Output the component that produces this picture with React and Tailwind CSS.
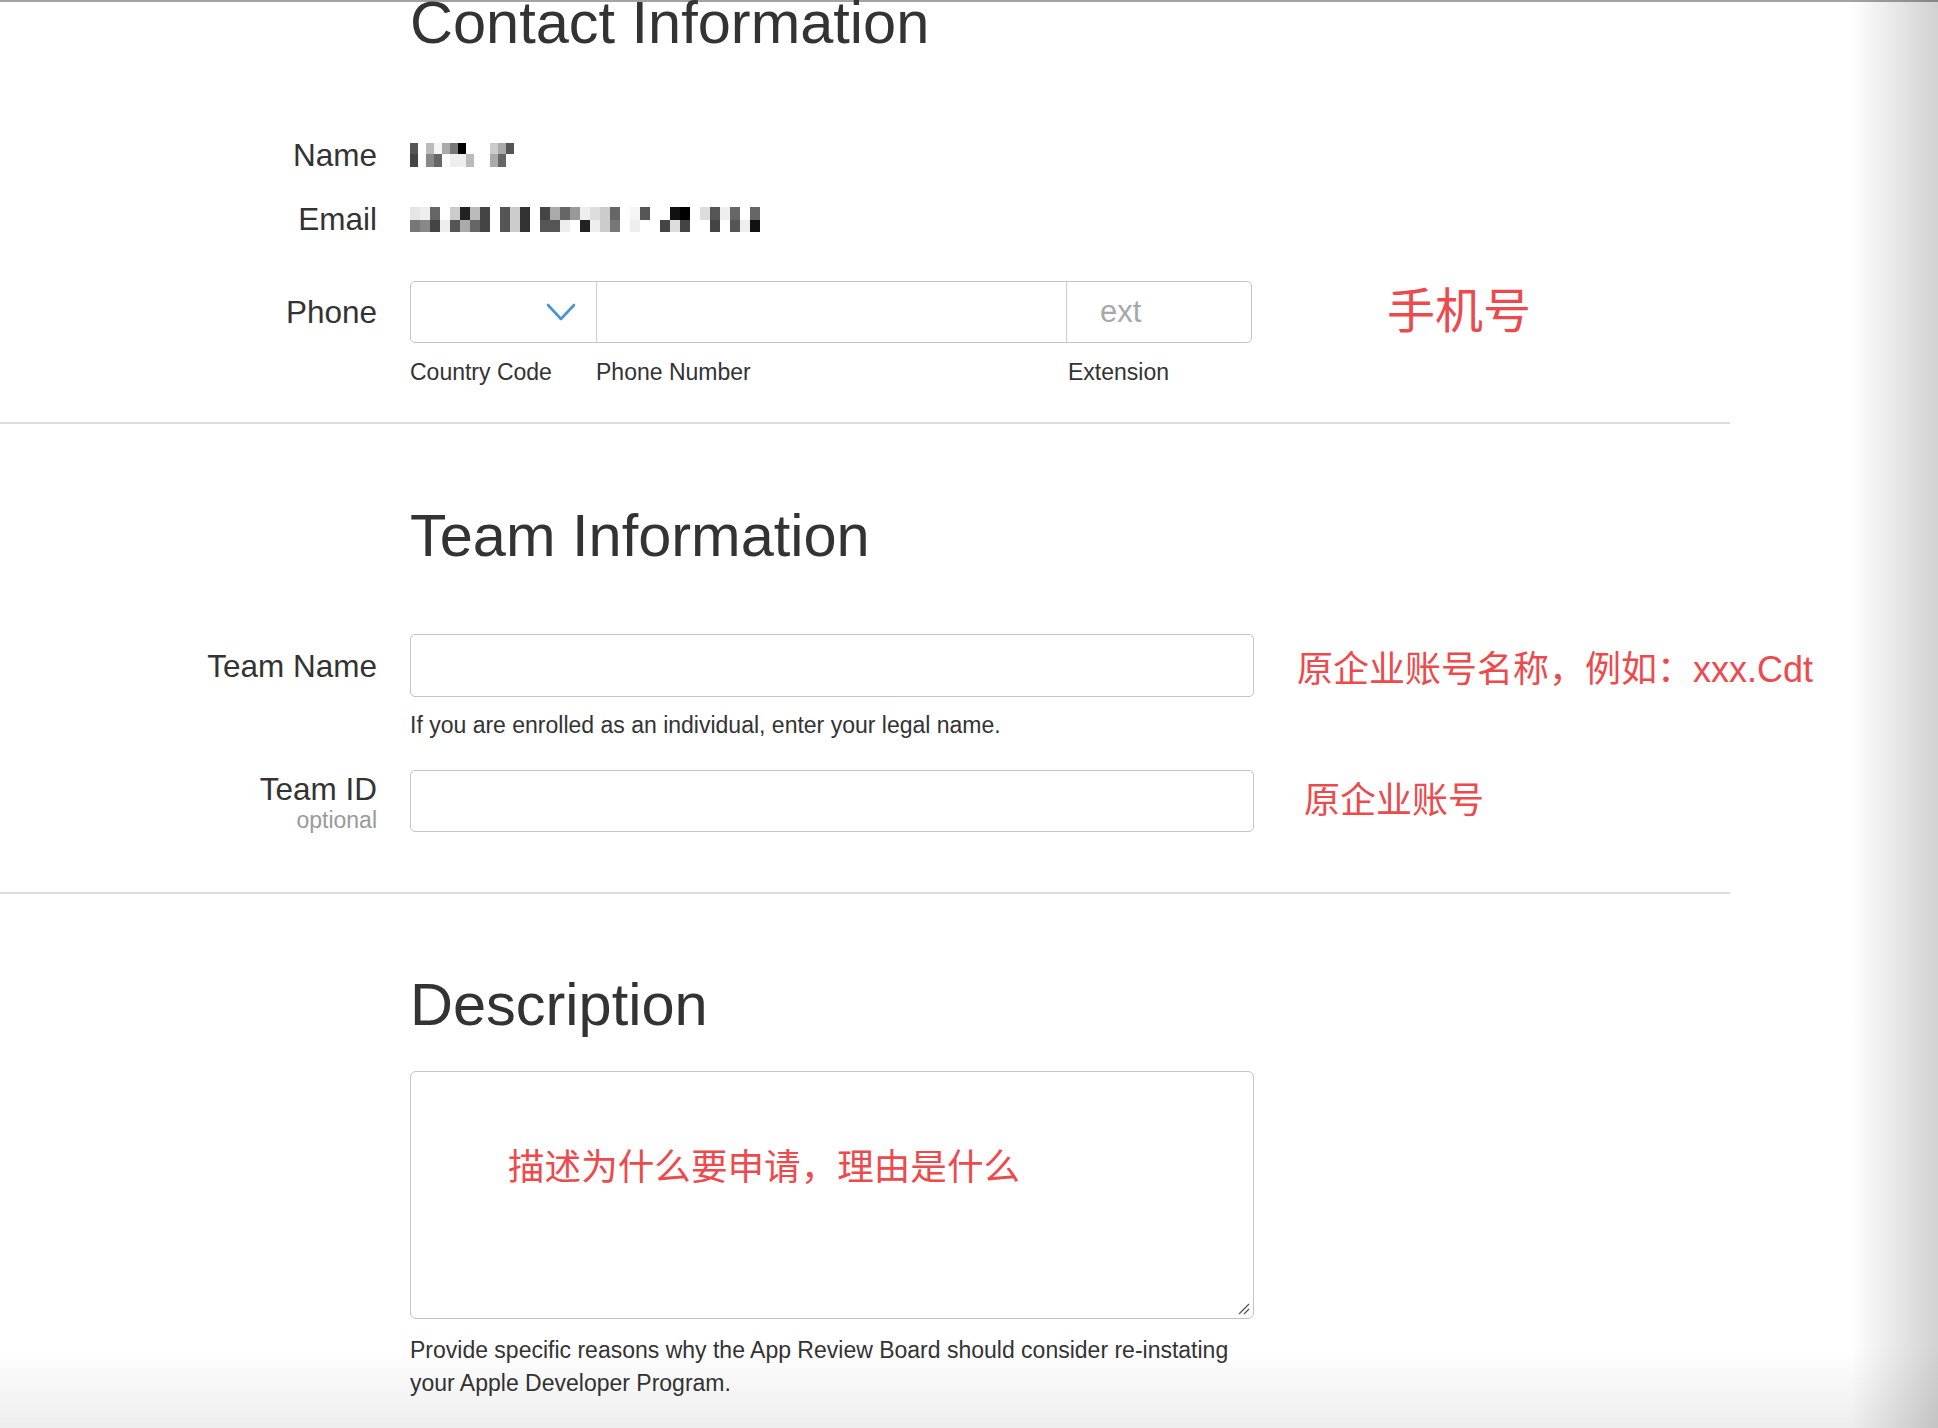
import React from "react";

const nameR1 = ["#555","#fff","#bbb","#f5f5f5","#aaa","#777","#000","#fff","#fff","#fff","#ccc","#aaa","#555"];
const nameR2 = ["#444","#fff","#888","#666","#fff","#eee","#eee","#bbb","#fff","#fff","#aaa","#666","#fff"];

const emailR1 = ["#e5e5e5","#eee","#666","#fff","#ccc","#222","#bbb","#444","#fff","#555","#ccc","#333","#fff","#444","#aaa","#666","#999","#eee","#ddd","#ccc","#666","#fff","#f5f5f5","#555","#fff","#fff","#111","#000","#fff","#ddd","#555","#eee","#666","#fff","#666"];
const emailR2 = ["#777","#888","#444","#eee","#555","#aaa","#666","#444","#fff","#555","#ccc","#333","#fff","#555","#555","#eee","#fff","#222","#eee","#ccc","#777","#fff","#eee","#fff","#fff","#444","#ddd","#444","#fff","#fff","#444","#fff","#555","#eee","#111"];

function Mosaic({ r1, r2, w, h1, h2 }) {
  return (
    <div className="flex flex-col">
      <div className="flex">
        {r1.map((c, i) => (
          <div key={i} style={{ backgroundColor: c, width: w, height: h1 }} />
        ))}
      </div>
      <div className="flex">
        {r2.map((c, i) => (
          <div key={i} style={{ backgroundColor: c, width: w, height: h2 }} />
        ))}
      </div>
    </div>
  );
}

function Label({ children }) {
  return (
    <div className="w-[377px] shrink-0 text-right text-[31.5px] leading-[36px] text-[#333]">
      {children}
    </div>
  );
}

function Heading({ children, className }) {
  return (
    <h2 className={"pl-[410px] text-[59.5px] leading-[59px] whitespace-nowrap text-[#333] " + className}>
      {children}
    </h2>
  );
}

function Red({ children, className }) {
  return (
    <div className={"shrink-0 whitespace-nowrap leading-none text-[#ec4a4c] " + className}>
      {children}
    </div>
  );
}

function Chevron() {
  return (
    <svg width="30" height="18" viewBox="0 0 30 18" fill="none">
      <polyline points="2,2 15,16 28,2" stroke="#4a94d4" strokeWidth="2.6" strokeLinecap="round" strokeLinejoin="round" />
    </svg>
  );
}

function Separator({ className }) {
  return <div className={"h-[2px] w-[1730px] bg-[#dcdcdc] " + className} />;
}

export default function App() {
  return (
    <div className="relative w-[1938px] h-[1428px] overflow-hidden bg-white text-[#333] font-['Liberation_Sans','Noto_Sans_CJK_SC',sans-serif]">
      <div className="h-[2px] bg-[#a3a3a3]" />

      {/* Contact Information */}
      <section>
        <Heading className="mt-[-9px]">Contact Information</Heading>

        <div className="mt-[85px] flex h-[36px]">
          <Label>Name</Label>
          <div className="ml-[33px] pt-[6px]">
            <Mosaic r1={nameR1} r2={nameR2} w={8} h1={11} h2={13} />
          </div>
        </div>

        <div className="mt-[28px] flex h-[36px]">
          <Label>Email</Label>
          <div className="ml-[33px] pt-[6px]">
            <Mosaic r1={emailR1} r2={emailR2} w={10} h1={13} h2={12} />
          </div>
        </div>

        <div className="mt-[44px] flex items-center">
          <Label>Phone</Label>
          <div className="ml-[33px] flex h-[62px] w-[842px] shrink-0 rounded-[5px] border border-[#c4c4c4]">
            <div className="flex w-[185px] items-center justify-end pr-[20px]">
              <Chevron />
            </div>
            <div className="w-[470px] border-l border-[#cfcfcf]" />
            <div className="flex flex-1 items-center border-l border-[#cfcfcf] pl-[33px] text-[31px] leading-[36px] text-[#a8a8a8]">
              ext
            </div>
          </div>
          <Red className="ml-[135px] mt-[0px] text-[48px]">手机号</Red>
        </div>

        <div className="mt-[16px] flex pl-[410px] text-[23px] leading-[26px] text-[#333]">
          <div className="w-[186px]">Country Code</div>
          <div className="w-[472px]">Phone Number</div>
          <div>Extension</div>
        </div>

        <Separator className="mt-[37px]" />
      </section>

      {/* Team Information */}
      <section>
        <Heading className="mt-[82px]">Team Information</Heading>

        <div className="mt-[69px] flex items-center">
          <Label>Team Name</Label>
          <div className="ml-[33px] h-[63px] w-[844px] shrink-0 rounded-[5px] border border-[#c4c4c4]" />
          <Red className="ml-[43px] mt-[9px] text-[36px]">原企业账号名称，例如：xxx.Cdt</Red>
        </div>

        <p className="mt-[15px] pl-[410px] whitespace-nowrap text-[23px] leading-[26px] text-[#333]">
          If you are enrolled as an individual, enter your legal name.
        </p>

        <div className="mt-[32px] flex items-start">
          <div className="w-[377px] shrink-0 pt-[1px] text-right">
            <div className="text-[31.5px] leading-[36px] text-[#333]">Team ID</div>
            <div className="text-[23px] leading-[26px] text-[#9a9a9a]">optional</div>
          </div>
          <div className="ml-[33px] flex items-center">
            <div className="h-[62px] w-[844px] shrink-0 rounded-[5px] border border-[#c4c4c4]" />
            <Red className="ml-[50px] mt-[0px] text-[36px]">原企业账号</Red>
          </div>
        </div>

        <Separator className="mt-[59px]" />
      </section>

      {/* Description */}
      <section>
        <Heading className="mt-[81px]">Description</Heading>

        <div className="relative ml-[410px] mt-[37px] h-[248px] w-[844px] rounded-[6px] border border-[#c4c4c4] pl-[97px] pt-[78px]">
          <Red className="text-[36.6px]">描述为什么要申请，理由是什么</Red>
          <svg className="absolute bottom-[3px] right-[3px]" width="12" height="12" viewBox="0 0 12 12">
            <line x1="1" y1="11" x2="11" y2="1" stroke="#555" strokeWidth="1.3" />
            <line x1="6" y1="11" x2="11" y2="6" stroke="#555" strokeWidth="1.3" />
          </svg>
        </div>

        <p className="mt-[15px] pl-[410px] whitespace-nowrap text-[23px] leading-[33px] text-[#333]">
          Provide specific reasons why the App Review Board should consider re-instating
          <br />
          your Apple Developer Program.
        </p>
      </section>

      {/* page edge shadows */}
      <div className="pointer-events-none absolute bottom-0 left-0 h-[80px] w-full bg-linear-to-b from-transparent to-black/[0.07]" />
      <div className="pointer-events-none absolute right-0 top-0 h-full w-[88px] bg-linear-to-r from-transparent to-black/[0.18]" />
    </div>
  );
}
